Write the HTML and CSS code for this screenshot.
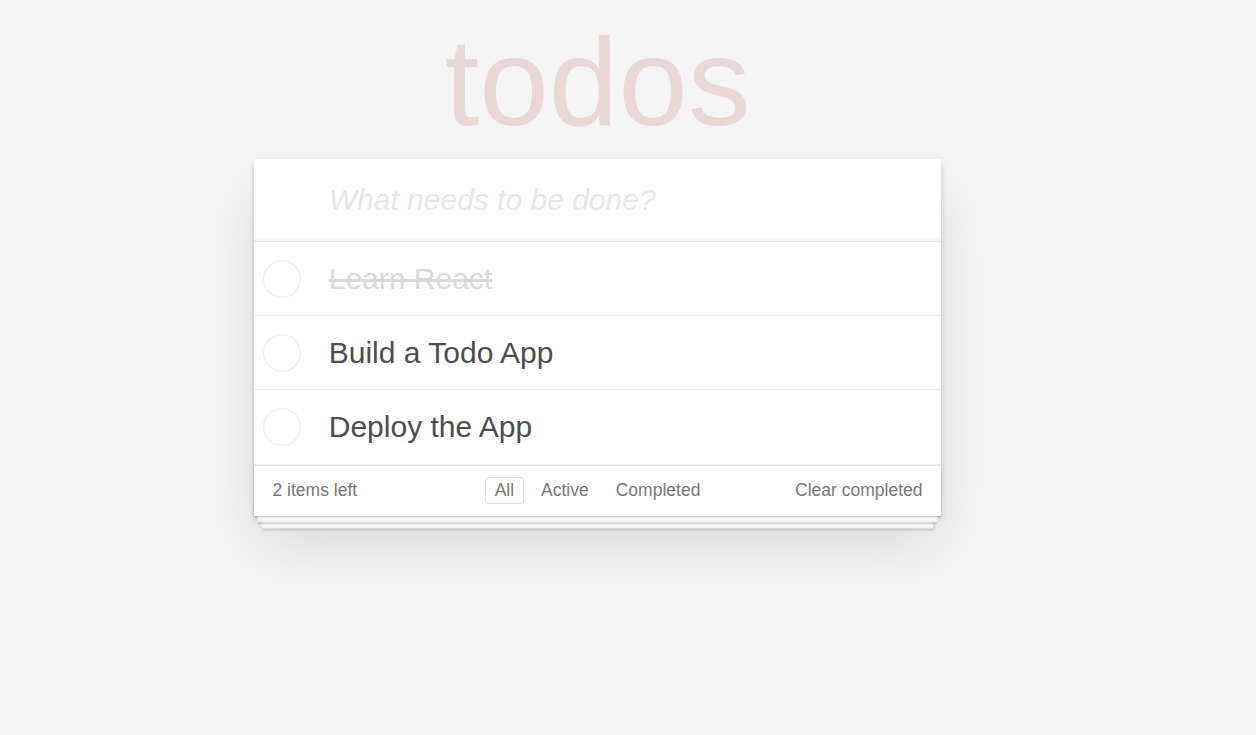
FILE: index.html
```html
<!DOCTYPE html>
<html lang="en">
<head>
<meta charset="utf-8">
<title>todos</title>
<link rel="stylesheet" href="styles.css">
</head>
<body>
<div class="page">
  <h1 class="title">todos</h1>
  <section class="todoapp">
    <header class="header">
      <input class="new-todo" placeholder="What needs to be done?">
    </header>
    <section class="main">
      <ul class="todo-list">
        <li class="todo completed">
          <span class="toggle"><svg width="38" height="38" viewBox="0 0 38 38"><circle cx="19" cy="19" r="18.4" fill="none" stroke="#ededed" stroke-width="1.2"/></svg></span>
          <label class="todo-label">Learn React</label>
        </li>
        <li class="todo">
          <span class="toggle"><svg width="38" height="38" viewBox="0 0 38 38"><circle cx="19" cy="19" r="18.4" fill="none" stroke="#ededed" stroke-width="1.2"/></svg></span>
          <label class="todo-label">Build a Todo App</label>
        </li>
        <li class="todo">
          <span class="toggle"><svg width="38" height="38" viewBox="0 0 38 38"><circle cx="19" cy="19" r="18.4" fill="none" stroke="#ededed" stroke-width="1.2"/></svg></span>
          <label class="todo-label">Deploy the App</label>
        </li>
      </ul>
    </section>
    <footer class="footer">
      <span class="todo-count">2 items left</span>
      <ul class="filters">
        <li><a class="filter selected" href="#/">All</a></li>
        <li><a class="filter" href="#/active">Active</a></li>
        <li><a class="filter" href="#/completed">Completed</a></li>
      </ul>
      <span class="clear-completed">Clear completed</span>
    </footer>
  </section>
</div>
</body>
</html>
```

FILE: styles.css
```css
html, body {
  margin: 0;
  padding: 0;
}

body {
  background: #f5f5f5;
  color: #4d4d4d;
  font-family: "Liberation Sans", Arial, Helvetica, sans-serif;
  font-size: 17.5px;
  line-height: 1.4em;
  min-height: 735px;
}

.page {
  width: 1195px;
  min-height: 735px;
  display: flex;
  flex-direction: column;
  align-items: center;
}

.title {
  margin: 19px 0 15px;
  font-size: 125px;
  line-height: 125px;
  font-weight: 400;
  color: rgba(175, 47, 47, 0.15);
  text-align: center;
}

.todoapp {
  width: 687.5px;
  background: #fff;
  position: relative;
  box-shadow: 0 2.5px 5px 0 rgba(0, 0, 0, 0.2), 0 31px 62px 0 rgba(0, 0, 0, 0.1);
}

.new-todo {
  display: block;
  width: 100%;
  box-sizing: border-box;
  margin: 0;
  padding: 20px 20px 20px 75px;
  border: none;
  outline: none;
  background: rgba(0, 0, 0, 0.003);
  box-shadow: inset 0 -2.5px 1.25px rgba(0, 0, 0, 0.03);
  font-family: inherit;
  font-size: 30px;
  line-height: 42px;
  height: 82px;
  color: #4d4d4d;
}

.new-todo::placeholder {
  font-style: italic;
  color: #e6e6e6;
}

.main {
  border-top: 1px solid #e6e6e6;
}

.todo-list {
  list-style: none;
  margin: 0;
  padding: 0;
}

.todo {
  display: flex;
  align-items: center;
  border-bottom: 1px solid #ededed;
  font-size: 30px;
}

.toggle {
  width: 56px;
  display: flex;
  justify-content: center;
  align-items: center;
  flex: none;
}

.toggle svg {
  display: block;
}

.todo-label {
  display: block;
  flex: 1;
  padding: 18.6px 18.75px 18.6px 19px;
  line-height: 1.2;
  color: #4d4d4d;
}

.completed .todo-label {
  color: #d9d9d9;
  text-decoration: line-through;
}

.footer {
  position: relative;
  display: grid;
  grid-template-columns: 1fr auto 1fr;
  align-items: center;
  color: #777;
  padding: 0 18.75px;
  height: 50px;
  border-top: 1px solid #e6e6e6;
}

.footer::before {
  content: '';
  position: absolute;
  right: 0;
  bottom: 0;
  left: 0;
  height: 50px;
  overflow: hidden;
  box-shadow: 0 1.25px 1.25px rgba(0, 0, 0, 0.2),
              0 10px 0 -3.75px #f6f6f6,
              0 11.25px 1.25px -3.75px rgba(0, 0, 0, 0.2),
              0 20px 0 -7.5px #f6f6f6,
              0 21.25px 2.5px -7.5px rgba(0, 0, 0, 0.2);
  pointer-events: none;
}

.todo-count {
  justify-self: start;
  position: relative;
}

.filters {
  list-style: none;
  margin: 0;
  padding: 0;
  display: flex;
  position: relative;
}

.filter {
  color: inherit;
  text-decoration: none;
  display: block;
  margin: 0 3.75px;
  padding: 0 8.75px;
  line-height: 25.5px;
  border: 1.25px solid transparent;
  border-radius: 3.75px;
}

.filter.selected {
  border-color: rgba(175, 47, 47, 0.2);
}

.clear-completed {
  justify-self: end;
  position: relative;
}
```
